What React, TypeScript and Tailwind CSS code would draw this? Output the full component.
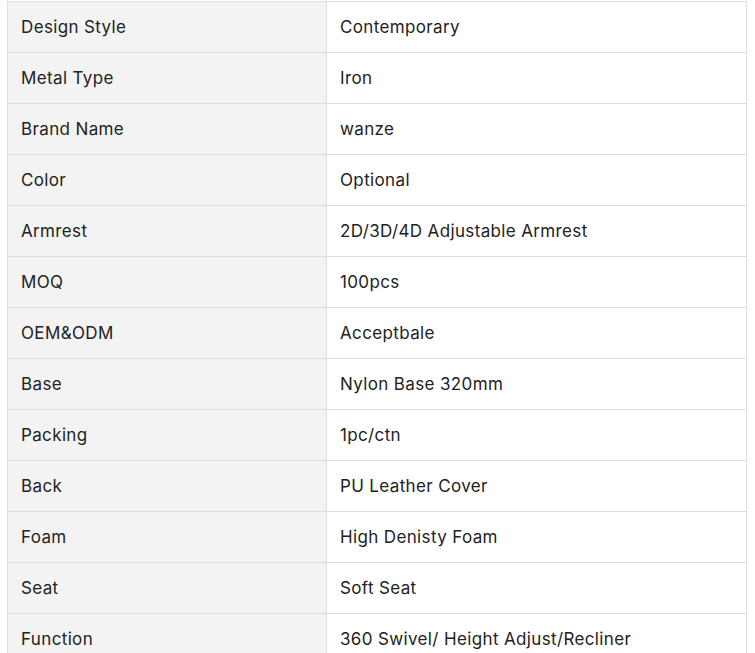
import React from "react";

const rows: [string, string][] = [
  ["Design Style", "Contemporary"],
  ["Metal Type", "Iron"],
  ["Brand Name", "wanze"],
  ["Color", "Optional"],
  ["Armrest", "2D/3D/4D Adjustable Armrest"],
  ["MOQ", "100pcs"],
  ["OEM&ODM", "Acceptbale"],
  ["Base", "Nylon Base 320mm"],
  ["Packing", "1pc/ctn"],
  ["Back", "PU Leather Cover"],
  ["Foam", "High Denisty Foam"],
  ["Seat", "Soft Seat"],
  ["Function", "360 Swivel/ Height Adjust/Recliner"],
];

export default function App() {
  return (
    <div className="bg-white pt-px pl-[7px] w-[755px] h-[653px] overflow-hidden" style={{ fontFamily: "Inter, 'Noto Sans', sans-serif" }}>
      <table className="border-collapse w-[740px] text-[17px] tracking-[0.36px] text-[#222]">
        <tbody>
          {rows.map(([k, v]) => (
            <tr key={k} className="h-[51px]">
              <td className="w-[319px] border border-[#dddddd] bg-[#f3f3f3] pl-[13px] pt-[2px] align-middle">{k}</td>
              <td className="border border-[#dddddd] bg-white pl-[13px] pt-[2px] align-middle">{v}</td>
            </tr>
          ))}
        </tbody>
      </table>
    </div>
  );
}
